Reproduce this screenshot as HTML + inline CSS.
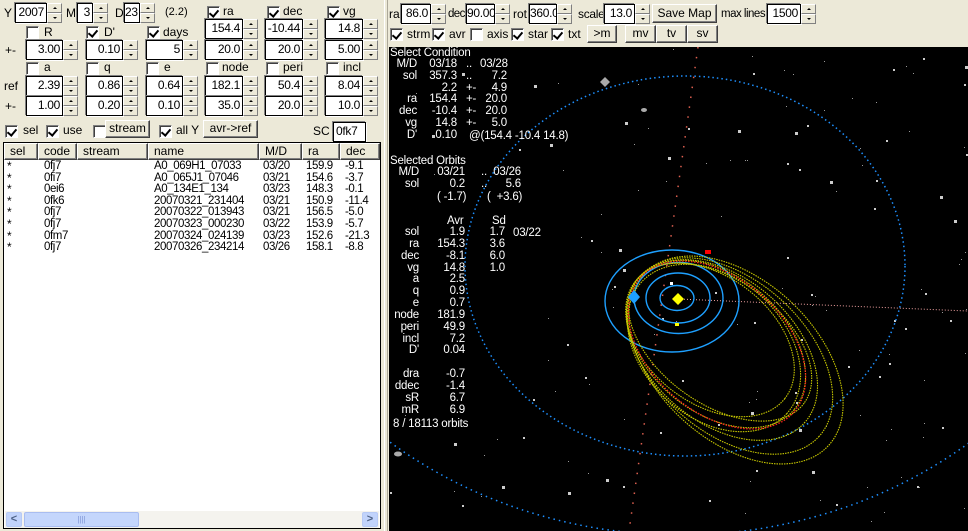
<!DOCTYPE html>
<html><head><meta charset="utf-8">
<style>
*{margin:0;padding:0;box-sizing:border-box}
body{width:968px;height:531px;overflow:hidden;background:#ece9d8;font-family:"Liberation Sans",sans-serif;font-size:12px;color:#000;position:relative}
.a{position:absolute;white-space:pre;line-height:14px}
.in{position:absolute;background:#fff;border:1px solid #000;box-shadow:-1px -1px 0 #808080,1px 1px 0 #fff;text-align:right;padding-right:2px;font-size:12px;line-height:17px;height:20px;letter-spacing:-0.3px}
.sp{position:absolute;width:15px;height:20px}
.sp div{height:10px;border:1px solid;border-color:#fff #808080 #808080 #fff;background:#ece9d8;position:relative}
.sp div:after{content:"";position:absolute;left:5px;width:0;height:0;border-left:2px solid transparent;border-right:2px solid transparent}
.sp .u:after{top:3px;border-bottom:2px solid #000}
.sp .d:after{top:3px;border-top:2px solid #000}
.cb{position:absolute;width:13px;height:13px;background:#fff;border:1px solid;border-color:#808080 #fff #fff #808080;box-shadow:inset 1px 1px 0 #404040}
.cb.c:after{content:"";position:absolute;left:3px;top:1px;width:4px;height:7px;border:solid #000;border-width:0 2px 2px 0;transform:rotate(40deg)}
.bt{position:absolute;background:#ece9d8;border:1px solid;border-color:#fff #404040 #404040 #fff;box-shadow:inset -1px -1px 0 #808080;text-align:center;line-height:15px;font-size:12px}
.hd{position:absolute;top:143px;height:17px;border:1px solid;border-color:#fff #404040 #404040 #fff;box-shadow:inset -1px -1px 0 #808080;line-height:15px;padding-left:5px;background:#ece9d8}
.w{color:#fff;font-size:11.5px;line-height:12px;letter-spacing:-0.2px}
.r{text-align:right}
.t{letter-spacing:-0.4px;font-size:11.5px}
</style></head><body>

<!-- LEFT PANEL -->
<div class="a" style="left:4px;top:6px">Y</div>
<div class="in" style="left:15px;top:3px;width:32px">2007</div><div class="sp" style="left:47px;top:3px"><div class="u"></div><div class="d"></div></div>
<div class="a" style="left:66px;top:6px">M</div>
<div class="in" style="left:77px;top:3px;width:16px">3</div><div class="sp" style="left:93px;top:3px"><div class="u"></div><div class="d"></div></div>
<div class="a" style="left:115px;top:6px">D</div>
<div class="in" style="left:124px;top:3px;width:16px">23</div><div class="sp" style="left:140px;top:3px"><div class="u"></div><div class="d"></div></div>
<div class="a" style="left:165px;top:5px;font-size:11px">(2.2)</div>
<div class="cb c" style="left:207px;top:6px"></div><div class="a" style="left:223px;top:4px">ra</div>
<div class="cb c" style="left:267px;top:6px"></div><div class="a" style="left:283px;top:4px">dec</div>
<div class="cb c" style="left:327px;top:6px"></div><div class="a" style="left:343px;top:4px">vg</div>

<div class="cb" style="left:26px;top:26px"></div><div class="a" style="left:44px;top:25px">R</div>
<div class="cb c" style="left:86px;top:26px"></div><div class="a" style="left:104px;top:25px">D'</div>
<div class="cb c" style="left:147px;top:26px"></div><div class="a" style="left:163px;top:25px">days</div>
<div class="in" style="left:205px;top:19px;width:38px">154.4</div><div class="sp" style="left:243px;top:19px"><div class="u"></div><div class="d"></div></div>
<div class="in" style="left:265px;top:19px;width:38px">-10.44</div><div class="sp" style="left:303px;top:19px"><div class="u"></div><div class="d"></div></div>
<div class="in" style="left:325px;top:19px;width:38px">14.8</div><div class="sp" style="left:363px;top:19px"><div class="u"></div><div class="d"></div></div>

<div class="a" style="left:5px;top:43px">+-</div>
<div class="in" style="left:26px;top:40px;width:37px">3.00</div><div class="sp" style="left:63px;top:40px"><div class="u"></div><div class="d"></div></div>
<div class="in" style="left:86px;top:40px;width:37px">0.10</div><div class="sp" style="left:123px;top:40px"><div class="u"></div><div class="d"></div></div>
<div class="in" style="left:146px;top:40px;width:37px">5</div><div class="sp" style="left:183px;top:40px"><div class="u"></div><div class="d"></div></div>
<div class="in" style="left:205px;top:40px;width:38px">20.0</div><div class="sp" style="left:243px;top:40px"><div class="u"></div><div class="d"></div></div>
<div class="in" style="left:265px;top:40px;width:38px">20.0</div><div class="sp" style="left:303px;top:40px"><div class="u"></div><div class="d"></div></div>
<div class="in" style="left:325px;top:40px;width:38px">5.00</div><div class="sp" style="left:363px;top:40px"><div class="u"></div><div class="d"></div></div>

<div class="cb" style="left:26px;top:62px"></div><div class="a" style="left:44px;top:60px">a</div>
<div class="cb" style="left:86px;top:62px"></div><div class="a" style="left:104px;top:60px">q</div>
<div class="cb" style="left:146px;top:62px"></div><div class="a" style="left:164px;top:60px">e</div>
<div class="cb" style="left:206px;top:62px"></div><div class="a" style="left:222px;top:60px">node</div>
<div class="cb" style="left:266px;top:62px"></div><div class="a" style="left:283px;top:60px">peri</div>
<div class="cb" style="left:326px;top:62px"></div><div class="a" style="left:343px;top:60px">incl</div>

<div class="a" style="left:4px;top:79px">ref</div>
<div class="in" style="left:26px;top:76px;width:37px">2.39</div><div class="sp" style="left:63px;top:76px"><div class="u"></div><div class="d"></div></div>
<div class="in" style="left:86px;top:76px;width:37px">0.86</div><div class="sp" style="left:123px;top:76px"><div class="u"></div><div class="d"></div></div>
<div class="in" style="left:146px;top:76px;width:37px">0.64</div><div class="sp" style="left:183px;top:76px"><div class="u"></div><div class="d"></div></div>
<div class="in" style="left:205px;top:76px;width:38px">182.1</div><div class="sp" style="left:243px;top:76px"><div class="u"></div><div class="d"></div></div>
<div class="in" style="left:265px;top:76px;width:38px">50.4</div><div class="sp" style="left:303px;top:76px"><div class="u"></div><div class="d"></div></div>
<div class="in" style="left:325px;top:76px;width:38px">8.04</div><div class="sp" style="left:363px;top:76px"><div class="u"></div><div class="d"></div></div>

<div class="a" style="left:5px;top:99px">+-</div>
<div class="in" style="left:26px;top:96px;width:37px">1.00</div><div class="sp" style="left:63px;top:96px"><div class="u"></div><div class="d"></div></div>
<div class="in" style="left:86px;top:96px;width:37px">0.20</div><div class="sp" style="left:123px;top:96px"><div class="u"></div><div class="d"></div></div>
<div class="in" style="left:146px;top:96px;width:37px">0.10</div><div class="sp" style="left:183px;top:96px"><div class="u"></div><div class="d"></div></div>
<div class="in" style="left:205px;top:96px;width:38px">35.0</div><div class="sp" style="left:243px;top:96px"><div class="u"></div><div class="d"></div></div>
<div class="in" style="left:265px;top:96px;width:38px">20.0</div><div class="sp" style="left:303px;top:96px"><div class="u"></div><div class="d"></div></div>
<div class="in" style="left:325px;top:96px;width:38px">10.0</div><div class="sp" style="left:363px;top:96px"><div class="u"></div><div class="d"></div></div>

<div class="cb c" style="left:5px;top:125px"></div><div class="a" style="left:23px;top:123px">sel</div>
<div class="cb c" style="left:46px;top:125px"></div><div class="a" style="left:63px;top:123px">use</div>
<div class="cb" style="left:93px;top:125px"></div>
<div class="bt" style="left:105px;top:120px;width:45px;height:18px">stream</div>
<div class="cb c" style="left:159px;top:125px"></div><div class="a" style="left:176px;top:123px">all Y</div>
<div class="bt" style="left:203px;top:120px;width:55px;height:18px">avr-&gt;ref</div>
<div class="a" style="left:313px;top:124px">SC</div>
<div class="in" style="left:333px;top:122px;width:33px;text-align:left;padding-left:2px">0fk7</div>

<!-- list -->
<div style="position:absolute;left:3px;top:142px;width:378px;height:387px;border:1px solid #000;background:#fff"></div>
<div class="hd" style="left:4px;width:34px">sel</div>
<div class="hd" style="left:38px;width:39px">code</div>
<div class="hd" style="left:77px;width:71px">stream</div>
<div class="hd" style="left:148px;width:111px">name</div>
<div class="hd" style="left:259px;width:43px">M/D</div>
<div class="hd" style="left:302px;width:38px">ra</div>
<div class="hd" style="left:340px;width:40px">dec</div>

<div class="a" style="left:7px;top:161px;line-height:11.6px;font-size:12px">*
*
*
*
*
*
*
*</div>
<div class="a t" style="left:44px;top:161px;line-height:11.6px">0fj7
0fi7
0ei6
0fk6
0fj7
0fj7
0fm7
0fj7</div>
<div class="a t" style="left:154px;top:161px;line-height:11.6px">A0_069H1_07033
A0_065J1_07046
A0_134E1_134
20070321_231404
20070322_013943
20070323_000230
20070324_024139
20070326_234214</div>
<div class="a t" style="left:263px;top:161px;line-height:11.6px">03/20
03/21
03/23
03/21
03/21
03/22
03/23
03/26</div>
<div class="a t" style="left:306px;top:161px;line-height:11.6px">159.9
154.6
148.3
150.9
156.5
153.9
152.6
158.1</div>
<div class="a t" style="left:345px;top:161px;line-height:11.6px">-9.1
-3.7
-0.1
-11.4
-5.0
-5.7
-21.3
-8.8</div>

<!-- scrollbar -->
<div style="position:absolute;left:5px;top:511px;width:374px;height:17px;background:#f4f3ee"></div>
<div style="position:absolute;left:6px;top:512px;width:16px;height:15px;background:#c1d3fb;border:1px solid #b7caf5;border-radius:2px;color:#4d6185;font-size:11px;line-height:13px;text-align:center;font-weight:bold">&lt;</div>
<div style="position:absolute;left:24px;top:512px;width:115px;height:15px;background:#c4d6fc;border:1px solid #a9bdf0;border-radius:2px;color:#7f96d6;font-size:8px;line-height:13px;text-align:center">||||</div>
<div style="position:absolute;left:362px;top:512px;width:16px;height:15px;background:#c1d3fb;border:1px solid #b7caf5;border-radius:2px;color:#4d6185;font-size:11px;line-height:13px;text-align:center;font-weight:bold">&gt;</div>

<!-- splitter -->
<div style="position:absolute;left:384px;top:0;width:4px;height:531px;background:#ece9d8;border-left:1px solid #fff;border-right:1px solid #aca899"></div>

<!-- RIGHT TOOLBAR -->
<div class="a" style="left:389px;top:7px">ra</div>
<div class="in" style="left:401px;top:4px;width:30px">86.0</div><div class="sp" style="left:431px;top:4px"><div class="u"></div><div class="d"></div></div>
<div class="a" style="left:448px;top:7px;letter-spacing:-0.6px;font-size:11.5px">dec</div>
<div class="in" style="left:466px;top:4px;width:29px">90.00</div><div class="sp" style="left:495px;top:4px"><div class="u"></div><div class="d"></div></div>
<div class="a" style="left:513px;top:7px">rot</div>
<div class="in" style="left:529px;top:4px;width:28px">360.0</div><div class="sp" style="left:557px;top:4px"><div class="u"></div><div class="d"></div></div>
<div class="a" style="left:578px;top:7px;letter-spacing:-0.3px">scale</div>
<div class="in" style="left:604px;top:4px;width:31px">13.0</div><div class="sp" style="left:635px;top:4px"><div class="u"></div><div class="d"></div></div>
<div class="bt" style="left:652px;top:4px;width:65px;height:19px;line-height:16px">Save Map</div>
<div class="a" style="left:721px;top:7px;letter-spacing:-0.5px;font-size:11.5px">max lines</div>
<div class="in" style="left:767px;top:4px;width:34px">1500</div><div class="sp" style="left:801px;top:4px"><div class="u"></div><div class="d"></div></div>

<div class="cb c" style="left:390px;top:28px"></div><div class="a" style="left:407px;top:27px">strm</div>
<div class="cb c" style="left:432px;top:28px"></div><div class="a" style="left:449px;top:27px">avr</div>
<div class="cb" style="left:470px;top:28px"></div><div class="a" style="left:487px;top:27px">axis</div>
<div class="cb c" style="left:511px;top:28px"></div><div class="a" style="left:528px;top:27px">star</div>
<div class="cb c" style="left:551px;top:28px"></div><div class="a" style="left:568px;top:27px">txt</div>
<div class="bt" style="left:587px;top:25px;width:30px;height:18px">&gt;m</div>
<div class="bt" style="left:625px;top:25px;width:31px;height:18px">mv</div>
<div class="bt" style="left:656px;top:25px;width:31px;height:18px">tv</div>
<div class="bt" style="left:687px;top:25px;width:31px;height:18px">sv</div>

<!-- CANVAS -->
<svg style="position:absolute;left:389px;top:47px" width="579" height="484" viewBox="389 47 579 484">
<rect x="389" y="47" width="579" height="484" fill="#000"/>
<g id="stars" fill="#bbb"></g>
<ellipse cx="680" cy="120" rx="460" ry="415" fill="none" stroke="#1e90ff" stroke-width="1.5" stroke-dasharray="1.5 4"/>
<ellipse cx="685" cy="266" rx="220" ry="190" fill="none" stroke="#1e90ff" stroke-width="1.5" stroke-dasharray="1.5 3"/>
<line x1="698" y1="47" x2="629" y2="531" stroke="#e06050" stroke-width="1.5" stroke-dasharray="1.5 8.5"/>
<line x1="678" y1="299" x2="968" y2="311" stroke="#f0a0a0" stroke-width="1" stroke-dasharray="1 2"/>
<g fill="none" stroke="#1ea0ff" stroke-width="1.4">
<ellipse cx="677" cy="298" rx="17" ry="12.5"/>
<ellipse cx="678" cy="298" rx="32" ry="25"/>
<ellipse cx="678.5" cy="298" rx="44.5" ry="35.5"/>
<ellipse cx="672" cy="301" rx="67" ry="51"/>
</g>
<g fill="none" stroke="#c8c800" stroke-width="1.1" stroke-dasharray="1.5 1">
<ellipse cx="716" cy="344" rx="102" ry="68" transform="rotate(40 716 344)"/>
<ellipse cx="722" cy="350" rx="110" ry="72" transform="rotate(41 722 350)"/>
<ellipse cx="730" cy="356" rx="120" ry="76" transform="rotate(42 730 356)"/>
<ellipse cx="710" cy="340" rx="95" ry="63" transform="rotate(38 710 340)"/>
<ellipse cx="720" cy="342" rx="104" ry="62" transform="rotate(36 720 342)"/>
<ellipse cx="736" cy="360" rx="126" ry="80" transform="rotate(43 736 360)"/>
<ellipse cx="714" cy="348" rx="98" ry="70" transform="rotate(42 714 348)"/>
</g>
<ellipse cx="717" cy="345" rx="102" ry="67" transform="rotate(41 717 345)" fill="none" stroke="#ff2020" stroke-width="1.3" stroke-dasharray="1.5 1.5"/>
<rect x="705" y="250" width="6" height="4" fill="#f00"/>
<polygon points="678,293 684,299 678,305 672,299" fill="#ffff00"/>
<rect x="670" y="282" width="3" height="3" fill="#fff"/>
<rect x="675" y="323" width="4" height="3" fill="#ff0"/>
<polygon points="634,290 640,297 634,304 628,297" fill="#1ea0ff"/>
<polygon points="605,77 610,82 605,87 600,82" fill="#aaa"/>
<ellipse cx="398" cy="454" rx="4" ry="2.5" fill="#aaa"/>
<ellipse cx="644" cy="110" rx="3" ry="2" fill="#aaa"/>
</svg>
<script>
(function(){var g=document.getElementById('stars'),s=7,h='';
function r(){s=(s*16807)%2147483647;return s/2147483647;}
for(var i=0;i<170;i++){var x=390+r()*578,y=48+r()*482,z=r()<0.12?3:(r()<0.4?2:1);
if(x<530&&y<430&&r()<0.7)continue;
h+='<rect x="'+x.toFixed(0)+'" y="'+y.toFixed(0)+'" width="'+z+'" height="'+z+'" fill="'+(z>1?'#ccc':'#999')+'"/>';}
g.innerHTML=h;})();
</script>

<div class="a w" style="left:390px;top:47px">Select Condition</div>
<div class="a w r" style="left:390px;top:59px;width:27px;line-height:11.8px">M/D
sol

ra
dec
vg
D'</div>
<div class="a w r" style="left:420px;top:59px;width:37px;line-height:11.8px">03/18
357.3
2.2
154.4
-10.4
14.8
0.10</div>
<div class="a w" style="left:466px;top:59px;line-height:11.8px">..
..
+-
+-
+-
+-</div>
<div class="a w r" style="left:480px;top:59px;width:27px;line-height:11.8px">03/28
7.2
4.9
20.0
20.0
5.0</div>
<div class="a w" style="left:469px;top:130px">@(154.4 -10.4 14.8)</div>

<div class="a w" style="left:390px;top:155px">Selected Orbits</div>
<div class="a w r" style="left:390px;top:167px;width:29px;line-height:11.8px">M/D
sol</div>
<div class="a w r" style="left:425px;top:167px;width:40px;line-height:11.8px">03/21
0.2</div>
<div class="a w" style="left:481px;top:167px;line-height:11.8px">..
..</div>
<div class="a w r" style="left:490px;top:167px;width:31px;line-height:11.8px">03/26
5.6</div>
<div class="a w" style="left:437px;top:191px">( -1.7)</div>
<div class="a w" style="left:487px;top:191px">(  +3.6)</div>
<div class="a w" style="left:447px;top:215px">Avr</div>
<div class="a w" style="left:492px;top:215px">Sd</div>
<div class="a w r" style="left:386px;top:227px;width:33px;line-height:11.85px">sol
ra
dec
vg
a
q
e
node
peri
incl
D'

dra
ddec
sR
mR</div>
<div class="a w r" style="left:425px;top:227px;width:40px;line-height:11.85px">1.9
154.3
-8.1
14.8
2.5
0.9
0.7
181.9
49.9
7.2
0.04

-0.7
-1.4
6.7
6.9</div>
<div class="a w r" style="left:480px;top:227px;width:25px;line-height:11.85px">1.7
3.6
6.0
1.0</div>
<div class="a w" style="left:513px;top:227px">03/22</div>
<div class="a w" style="left:393px;top:418px">8 / 18113 orbits</div>
</body></html>
